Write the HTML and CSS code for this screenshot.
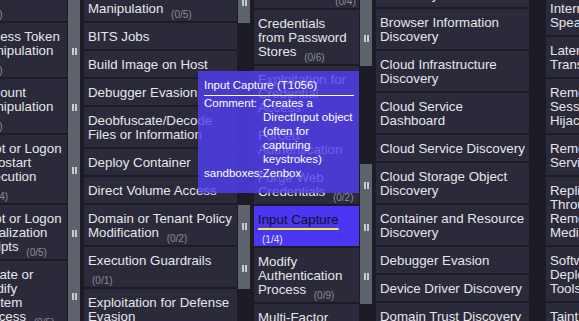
FILE: index.html
```html
<!DOCTYPE html>
<html lang="en">
<head>
    <meta charset="UTF-8">
    <meta name="viewport" content="width=device-width, initial-scale=1.0">
    <title>Matrix</title>
    <link rel="stylesheet" href="styles.css">
</head>
<body>
    <div class="matrix">
        <div class="tactic priv">
            <div class="tech"><div class="cell">Abuse Elevation Control Mechanism <span class="count">(0/6)</span></div><div class="side sub"><span class="grip"></span></div></div>
            <div class="tech"><div class="cell">Access Token Manipulation <span class="count">(0/5)</span></div><div class="side sub"><span class="grip"></span></div></div>
            <div class="tech"><div class="cell">Account Manipulation <span class="count">(0/7)</span></div><div class="side sub"><span class="grip"></span></div></div>
            <div class="tech"><div class="cell">Boot or Logon Autostart Execution <span class="count">(0/14)</span></div><div class="side sub"><span class="grip"></span></div></div>
            <div class="tech"><div class="cell">Boot or Logon Initialization Scripts <span class="count">(0/5)</span></div><div class="side sub"><span class="grip"></span></div></div>
            <div class="tech"><div class="cell">Create or Modify System Process <span class="count">(0/5)</span></div><div class="side sub"><span class="grip"></span></div></div>
        </div>

        <div class="tactic defense">
            <div class="tech"><div class="cell">Access Token Manipulation <span class="count">(0/5)</span></div><div class="side sub"><span class="grip"></span></div></div>
            <div class="tech"><div class="cell">BITS Jobs</div><div class="side"></div></div>
            <div class="tech"><div class="cell">Build Image on Host</div><div class="side"></div></div>
            <div class="tech"><div class="cell">Debugger Evasion</div><div class="side"></div></div>
            <div class="tech"><div class="cell">Deobfuscate/Decode Files or Information</div><div class="side"></div></div>
            <div class="tech"><div class="cell">Deploy Container</div><div class="side"></div></div>
            <div class="tech"><div class="cell">Direct Volume Access</div><div class="side"></div></div>
            <div class="tech"><div class="cell">Domain or Tenant Policy Modification <span class="count">(0/2)</span></div><div class="side sub"><span class="grip"></span></div></div>
            <div class="tech"><div class="cell">Execution Guardrails <span class="count">(0/1)</span></div><div class="side sub"><span class="grip"></span></div></div>
            <div class="tech"><div class="cell">Exploitation for Defense Evasion</div><div class="side"></div></div>
        </div>

        <div class="tactic cred">
            <div class="tech"><div class="cell nowrap">Brute Force <span class="count">(0/4)</span></div><div class="side sub"><span class="grip"></span></div></div>
            <div class="tech"><div class="cell">Credentials from Password Stores <span class="count">(0/6)</span></div><div class="side sub"><span class="grip"></span></div></div>
            <div class="tech"><div class="cell">Exploitation for Credential Access</div><div class="side"></div></div>
            <div class="tech"><div class="cell">Forced Authentication</div><div class="side"></div></div>
            <div class="tech"><div class="cell">Forge Web Credentials <span class="count">(0/2)</span></div><div class="side sub"><span class="grip"></span></div></div>
            <div class="tech"><div class="cell selected"><span class="name">Input Capture</span> <span class="count">(1/4)</span></div><div class="side sub"><span class="grip"></span></div></div>
            <div class="tech"><div class="cell">Modify Authentication Process <span class="count">(0/9)</span></div><div class="side sub"><span class="grip"></span></div></div>
            <div class="tech"><div class="cell">Multi-Factor Authentication Interception</div><div class="side"></div></div>
        </div>

        <div class="tactic discovery">
            <div class="tech"><div class="cell">Application Window Discovery</div><div class="side"></div></div>
            <div class="tech"><div class="cell">Browser Information Discovery</div><div class="side"></div></div>
            <div class="tech"><div class="cell">Cloud Infrastructure Discovery</div><div class="side"></div></div>
            <div class="tech"><div class="cell">Cloud Service Dashboard</div><div class="side"></div></div>
            <div class="tech"><div class="cell">Cloud Service Discovery</div><div class="side"></div></div>
            <div class="tech"><div class="cell">Cloud Storage Object Discovery</div><div class="side"></div></div>
            <div class="tech"><div class="cell">Container and Resource Discovery</div><div class="side"></div></div>
            <div class="tech"><div class="cell">Debugger Evasion</div><div class="side"></div></div>
            <div class="tech"><div class="cell">Device Driver Discovery</div><div class="side"></div></div>
            <div class="tech"><div class="cell">Domain Trust Discovery</div><div class="side"></div></div>
        </div>

        <div class="tactic lateral">
            <div class="tech"><div class="cell">Internal Spearphishing</div><div class="side"></div></div>
            <div class="tech"><div class="cell">Lateral Tool Transfer</div><div class="side"></div></div>
            <div class="tech"><div class="cell">Remote Service Session Hijacking <span class="count">(0/2)</span></div><div class="side sub"><span class="grip"></span></div></div>
            <div class="tech"><div class="cell">Remote Services <span class="count">(0/8)</span></div><div class="side sub"><span class="grip"></span></div></div>
            <div class="tech"><div class="cell">Replication Through Removable Media</div><div class="side"></div></div>
            <div class="tech"><div class="cell">Software Deployment Tools</div><div class="side"></div></div>
            <div class="tech"><div class="cell">Taint Shared Content</div><div class="side"></div></div>
        </div>
    </div>

    <div class="tooltip">
        <div class="tooltip-title">Input Capture (T1056)</div>
        <div class="tooltip-row">
            <span>Comment:</span>
            <span>Creates a DirectInput object (often for capturing keystrokes)</span>
        </div>
        <div>sandboxes:Zenbox</div>
    </div>
</body>
</html>
```

FILE: styles.css
```css
body {
    margin: 0;
    height: 321px;
    overflow: hidden;
    background: #1d1c26;
    font-family: "Liberation Sans", Arial, sans-serif;
}

.matrix {
    display: flex;
    align-items: flex-start;
    gap: 4px;
    margin-left: -26px;
}

.tactic {
    display: flex;
    flex-direction: column;
    flex: none;
}

.priv { margin-top: -61px; }
.defense { margin-top: -19px; }
.cred { margin-top: -18px; }
.discovery { margin-top: -33px; }
.lateral { margin-top: -5px; }

.tech {
    display: flex;
}

.cell {
    box-sizing: border-box;
    padding: 7px 2px 5px 4px;
    background: #2b2a3a;
    border-bottom: 2px solid #1d1c26;
    color: #e6e6ea;
    font-size: 13.3px;
    line-height: 14px;
}

.priv .cell { width: 93px; padding-right: 4px; }
.defense .cell { width: 153px; }
.cred .cell { width: 105px; padding-right: 4px; }
.discovery .cell { width: 153px; }
.lateral .cell { width: 106px; padding-right: 4px; }

.cell.nowrap {
    white-space: nowrap;
}

.count {
    position: relative;
    top: 5px;
    margin-left: 4px;
    font-size: 10px;
    line-height: 1;
    color: #8d8c98;
}

.cell.selected {
    background: #4a36f3;
    color: #14121c;
}

.selected .name {
    text-decoration: underline 2px #f2f22a;
    text-underline-offset: 4px;
}

.selected .count {
    color: #e4e2f2;
}

.side {
    flex: none;
    width: 12px;
    margin-left: 1px;
    display: flex;
    align-items: center;
    justify-content: center;
}

.side.sub {
    background: #5c636b;
}

.grip {
    box-sizing: border-box;
    width: 5px;
    height: 7px;
    border-left: 2px solid #c8cbcf;
    border-right: 2px solid #c8cbcf;
}

.tooltip {
    position: absolute;
    left: 198px;
    top: 71px;
    width: 161px;
    box-sizing: border-box;
    padding: 7px 5px 13px 6px;
    background: rgba(80, 64, 240, 0.82);
    color: #ffffff;
    font-size: 11.5px;
    line-height: 14px;
}

.tooltip-title {
    padding-bottom: 3px;
    border-bottom: 1px solid #ffffff;
}

.tooltip-row {
    display: grid;
    grid-template-columns: auto 1fr;
    column-gap: 6px;
}
```
